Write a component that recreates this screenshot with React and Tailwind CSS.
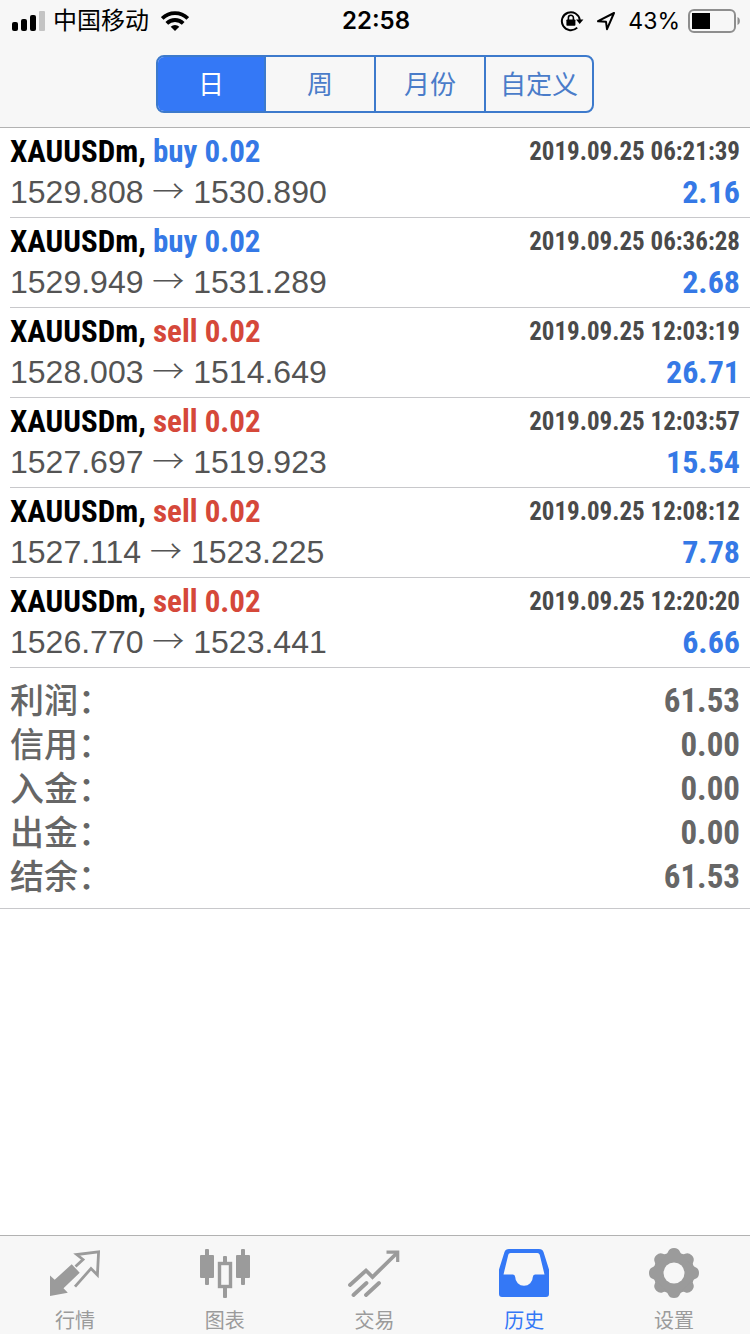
import { useState } from 'react';
import clsx from 'clsx';

const periods = ['日', '周', '月份', '自定义'];

const trades = [
  { side: 'buy', open: '1529.808', close: '1530.890', time: '2019.09.25 06:21:39', profit: '2.16' },
  { side: 'buy', open: '1529.949', close: '1531.289', time: '2019.09.25 06:36:28', profit: '2.68' },
  { side: 'sell', open: '1528.003', close: '1514.649', time: '2019.09.25 12:03:19', profit: '26.71' },
  { side: 'sell', open: '1527.697', close: '1519.923', time: '2019.09.25 12:03:57', profit: '15.54' },
  { side: 'sell', open: '1527.114', close: '1523.225', time: '2019.09.25 12:08:12', profit: '7.78' },
  { side: 'sell', open: '1526.770', close: '1523.441', time: '2019.09.25 12:20:20', profit: '6.66' },
];

const totals = [
  { label: '利润', value: '61.53' },
  { label: '信用', value: '0.00' },
  { label: '入金', value: '0.00' },
  { label: '出金', value: '0.00' },
  { label: '结余', value: '61.53' },
];

const condensed = "font-['Roboto_Condensed','Liberation_Sans_Narrow',sans-serif] font-bold";

function SignalIcon() {
  return (
    <svg width="34" height="22" viewBox="0 0 34 22" aria-hidden="true">
      <rect x="1" y="12" width="6" height="9" rx="2" />
      <rect x="10" y="9" width="6" height="12" rx="2" />
      <rect x="19" y="5" width="6" height="16" rx="2" />
      <rect x="28" y="1" width="6" height="20" rx="1" fill="#c4c4c4" />
    </svg>
  );
}

function WifiIcon() {
  return (
    <svg width="28" height="20" viewBox="0 0 28 20" fill="none" stroke="#000" strokeWidth="3.8" aria-hidden="true">
      <path d="M1.2 7.4a18.2 18.2 0 0 1 25.6 0" />
      <path d="M5.8 12.4a11.6 11.6 0 0 1 16.4 0" />
      <path d="M14 20l-4.3-4.3a6.1 6.1 0 0 1 8.6 0z" fill="#000" stroke="none" />
    </svg>
  );
}

function RotationLockIcon() {
  return (
    <svg width="24" height="22" viewBox="0 0 24 22" fill="none" stroke="#000" aria-hidden="true">
      <path d="M17.2 17.6A9 9 0 1 1 19.8 10" strokeWidth="2" />
      <path d="M16 9.4h7.4l-3.7 4.6z" fill="#000" stroke="none" />
      <rect x="6.4" y="9.4" width="9" height="6.4" rx="0.8" fill="#000" stroke="none" />
      <path d="M8.4 10V7.8a2.5 2.5 0 0 1 5 0V10" strokeWidth="1.6" />
    </svg>
  );
}

function LocationIcon() {
  return (
    <svg width="20" height="20" viewBox="0 0 20 20" fill="none" stroke="#000" strokeWidth="2" strokeLinejoin="round" aria-hidden="true">
      <path d="M18 2L2 10.2l8 .6 1 7.4z" />
    </svg>
  );
}

function BatteryIcon() {
  return (
    <svg width="53" height="24" viewBox="0 0 53 24" aria-hidden="true">
      <rect x="1" y="1" width="46" height="22" rx="5" fill="none" stroke="#8e8e8e" strokeWidth="2" />
      <rect x="4" y="4" width="18" height="16" fill="#000" />
      <path d="M49.5 8c3.2 1.2 3.2 6.8 0 8z" fill="#8e8e8e" />
    </svg>
  );
}

function QuotesIcon() {
  return (
    <svg width="50" height="48" viewBox="0 0 50 48" aria-hidden="true">
      <path d="M0 26.5l4.7 4.2L21.700 15.3l8 8.4L13.5 39.3l4.3 4.4L0 47z" fill="currentColor" />
      <path d="M25.5 17.5L33 10.5l-6.3-5L48.6 2.8 47.4 26l-6.4-6.5L25 37.7" fill="none" stroke="currentColor" strokeWidth="2.8" />
    </svg>
  );
}

function ChartIcon() {
  return (
    <svg width="50" height="50" viewBox="1 0 50 50" fill="currentColor" aria-hidden="true">
      <rect x="1" y="7" width="14" height="23" rx="1" />
      <rect x="6" y="1" width="4" height="36" rx="1" />
      <rect x="37" y="7" width="14" height="23" rx="1" />
      <rect x="42" y="1" width="4" height="36" rx="1" />
      <rect x="20.5" y="15.5" width="11" height="23" fill="none" stroke="currentColor" strokeWidth="3.4" />
      <rect x="24" y="8" width="4" height="8" rx="1" />
      <rect x="24" y="39" width="4" height="11" rx="1" />
    </svg>
  );
}

function TradeIcon() {
  return (
    <svg width="52" height="48" viewBox="0 0 52 48" fill="none" stroke="currentColor" strokeWidth="3.8" aria-hidden="true">
      <path d="M2 36L18 21.5l6.5 6.5L48 5" strokeLinecap="round" />
      <path d="M38.5 3.2h11.2V13" strokeWidth="3.2" />
      <path d="M5.5 46L18.5 34M18 46L31 34" strokeLinecap="round" />
    </svg>
  );
}

function HistoryIcon() {
  return (
    <svg width="50" height="50" viewBox="1 0 50 50" fill="currentColor" fillRule="evenodd" aria-hidden="true">
      <path d="M11 1h30q3.5 0 4.6 3.2L51 21.5V46q0 3-3 3H4q-3 0-3-3V21.500L6.4 4.2Q7.5 1 11 1zM12.5 5q-1.6 0-2.2 1.800L5.5 26.5H15q2 0 2.2 2.5a8.8 8.8 0 0 0 17.6 0q.2-2.500 2.2-2.5h9.5L41.7 6.8Q41.1 5 39.5 5z" />
    </svg>
  );
}

function SettingsIcon() {
  return (
    <svg width="50" height="50" viewBox="-25 -25 50 50" aria-hidden="true">
      <g fill="currentColor">
        <circle r="20.8" />
        {[0, 45, 90, 135, 180, 225, 270, 315].map((angle) => (
          <path key={angle} d="M-9-18Q-6.400-19-5.800-21.500Q-4.500-25 0-25T5.800-21.500Q6.400-19 9-18z" transform={`rotate(${angle})`} />
        ))}
      </g>
      <circle r="10.5" fill="#f7f7f7" />
    </svg>
  );
}

const tabs = [
  { label: '行情', icon: QuotesIcon },
  { label: '图表', icon: ChartIcon },
  { label: '交易', icon: TradeIcon },
  { label: '历史', icon: HistoryIcon },
  { label: '设置', icon: SettingsIcon },
];

function StatusBar() {
  return (
    <div className="grid grid-cols-3 items-center h-[42px] pl-[11px] pr-[9px] text-black">
      <div className="flex items-center gap-2">
        <SignalIcon />
        <span className="text-2xl">中国移动</span>
        <span className="pl-1">
          <WifiIcon />
        </span>
      </div>
      <span className="text-center text-2xl font-semibold">22:58</span>
      <div className="flex items-center justify-end gap-3">
        <RotationLockIcon />
        <LocationIcon />
        <div className="flex items-center gap-2">
          <span className="text-[23px]">43%</span>
          <BatteryIcon />
        </div>
      </div>
    </div>
  );
}

function TradeRow({ trade }) {
  return (
    <li className="ml-[10px] pr-[10px] pt-1 h-[90px] border-b border-[#c8c8cb]">
      <div className={clsx('flex items-center justify-between h-10 leading-10', condensed)}>
        <p className="text-[31px] text-black">
          XAUUSDm,{' '}
          <span className={trade.side === 'buy' ? 'text-[#3579e6]' : 'text-[#d5483a]'}>{trade.side} 0.02</span>
        </p>
        <time className="text-[25px] text-[#4a4a4a]">{trade.time}</time>
      </div>
      <div className="flex items-center justify-between h-10 leading-10">
        <p className="text-[32px] text-[#545454]">
          {trade.open} <span className="font-['Noto_Sans_CJK_SC',sans-serif] font-light leading-none">→</span> {trade.close}
        </p>
        <span className={clsx('text-[32px] text-[#3579e6]', condensed)}>{trade.profit}</span>
      </div>
    </li>
  );
}

export default function App() {
  const [period, setPeriod] = useState('日');
  const [tab, setTab] = useState('历史');

  return (
    <div className="min-h-screen flex flex-col bg-white font-['Liberation_Sans','Noto_Sans_CJK_SC',sans-serif]">
      <header className="bg-[#f7f7f7] border-b border-[#b2b2b2] font-['Inter','Noto_Sans_CJK_SC',sans-serif]">
        <StatusBar />
        <div className="flex justify-center pt-[13px] pb-[14px] px-4">
          <div className="grid grid-cols-[108px_110px_110px_106px] h-[58px] rounded-lg border-2 border-[#3d7acc] divide-x-2 divide-[#3d7acc] overflow-hidden text-[26px]">
            {periods.map((name) => (
              <button
                key={name}
                type="button"
                aria-pressed={period === name}
                onClick={() => setPeriod(name)}
                className={period === name ? 'bg-[#3478f6] text-white' : 'text-[#4a7cc9]'}
              >
                {name}
              </button>
            ))}
          </div>
        </div>
      </header>

      <main className="flex-1">
        <ul>
          {trades.map((trade) => (
            <TradeRow key={trade.time} trade={trade} />
          ))}
        </ul>
        <dl className="px-[10px] py-[10px] border-b border-[#c8c8cb] text-[#666]">
          {totals.map((item) => (
            <div key={item.label} className="flex items-start justify-between h-11">
              <dt className="font-['Noto_Sans_CJK_SC',sans-serif] text-[34px] leading-[42px] font-medium">{item.label}：</dt>
              <dd className={clsx('text-[33px] leading-[46px]', condensed)}>{item.value}</dd>
            </div>
          ))}
        </dl>
      </main>

      <nav className="grid grid-cols-5 h-[99px] pr-px bg-[#f7f7f7] border-t border-[#b2b2b2]">
        {tabs.map((item) => (
          <button
            key={item.label}
            type="button"
            onClick={() => setTab(item.label)}
            className={clsx('flex flex-col items-center pt-3', tab === item.label ? 'text-[#3478f6]' : 'text-[#9b9b9b]')}
          >
            <span className="h-[50px] flex items-center">
              <item.icon />
            </span>
            <span className="pt-[9px] text-xl leading-7">{item.label}</span>
          </button>
        ))}
      </nav>
    </div>
  );
}
